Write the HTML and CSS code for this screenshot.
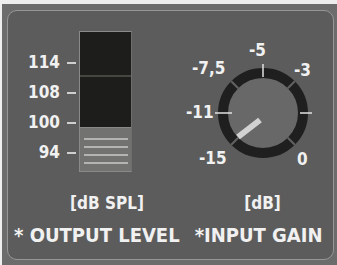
FILE: index.html
```html
<!DOCTYPE html>
<html>
<head>
<meta charset="utf-8">
<link rel="stylesheet" href="styles.css">
</head>
<body>
<div class="frame">
  <div class="panel">
    <div class="controls">
      <div class="meter-group">
        <div class="scale">
          <div class="mark"><span class="num">114</span><span class="tick"></span></div>
          <div class="mark"><span class="num">108</span><span class="tick"></span></div>
          <div class="mark"><span class="num">100</span><span class="tick"></span></div>
          <div class="mark"><span class="num">94</span><span class="tick"></span></div>
        </div>
        <div class="meter-col">
          <div class="meter">
            <div class="seg seg-top"></div>
            <div class="seg seg-mid"></div>
            <div class="seg seg-low">
              <span class="bar"></span><span class="bar"></span><span class="bar"></span><span class="bar"></span>
            </div>
          </div>
          <div class="unit unit-spl">[dB SPL]</div>
        </div>
      </div>
      <div class="knob-group">
        <div class="knob">
          <svg class="dial" viewBox="0 0 150 130" width="150" height="130">
            <circle cx="80" cy="73" r="40" fill="#686868" stroke="#1f1f1f" stroke-width="10"/>
            <g stroke="#626262" stroke-width="2">
              <line x1="55.25" y1="48.25" x2="48.2" y2="41.2"/>
              <line x1="104.75" y1="48.25" x2="111.8" y2="41.2"/>
              <line x1="55.25" y1="97.75" x2="48.2" y2="104.8"/>
              <line x1="104.75" y1="97.75" x2="111.8" y2="104.8"/>
            </g>
            <g stroke="#e2e2e2" stroke-width="1.5">
              <line x1="80" y1="37" x2="80" y2="24"/>
              <line x1="32" y1="73" x2="49" y2="73"/>
              <line x1="117" y1="73" x2="129" y2="73"/>
            </g>
            <line x1="77" y1="80" x2="55" y2="97" stroke="#d2d2d2" stroke-width="6"/>
          </svg>
          <span class="lbl l-5">-5</span>
          <span class="lbl l-75">-7,5</span>
          <span class="lbl l-3">-3</span>
          <span class="lbl l-11">-11</span>
          <span class="lbl l-15">-15</span>
          <span class="lbl l-0">0</span>
        </div>
        <div class="unit unit-db">[dB]</div>
      </div>
    </div>
    <div class="titles">
      <span class="title">* OUTPUT LEVEL</span>
      <span class="title">*INPUT GAIN</span>
    </div>
  </div>
</div>
</body>
</html>
```

FILE: styles.css
```css
* { box-sizing: border-box; }
html, body { margin: 0; padding: 0; }
body {
  width: 337px;
  height: 265px;
  background: #eeeeee;
  overflow: hidden;
  font-family: "DejaVu Sans", sans-serif;
  font-stretch: condensed;
  font-weight: bold;
  color: #f1f1f1;
}
.frame {
  margin: 4px 0 0 2px;
  height: 261px;
  background: #6c6c6c;
  padding: 6px 6px 5px 5px;
  display: flex;
}
.panel {
  flex: 1;
  border: 1px solid #969696;
  border-radius: 10px;
  background: #5c5c5c;
  padding-top: 20px;
  display: flex;
  flex-direction: column;
}
.controls {
  display: flex;
  align-items: flex-start;
  padding-left: 12px;
}
.meter-group {
  display: flex;
  align-items: flex-start;
}
.scale {
  display: flex;
  flex-direction: column;
  padding-top: 21px;
}
.mark {
  height: 20px;
  display: flex;
  align-items: center;
}
.mark + .mark { margin-top: 10px; }
.num {
  width: 40px;
  text-align: right;
  font-size: 17px;
  line-height: 17px;
  margin-right: 7px;
}
.tick {
  width: 9px;
  height: 2px;
  background: #cfcfcf;
  margin-top: 2px;
}
.meter-col {
  margin-left: 3px;
  display: flex;
  flex-direction: column;
  align-items: center;
  width: 53px;
}
.meter {
  width: 53px;
  height: 141px;
  border: 1px solid #8a8a8a;
  border-right-color: #6e6e6e;
  background: #1d1d1b;
  display: flex;
  flex-direction: column;
}
.seg-top { height: 45px; border-bottom: 2px solid #454542; }
.seg-mid { height: 50px; }
.seg-low {
  flex: 1;
  background: #727270;
  border-top: 1px solid #8a8a88;
  display: flex;
  flex-direction: column;
  padding: 10px 3px 0 4px;
  gap: 6px;
}
.bar {
  display: block;
  height: 2px;
  background: #b4b4b2;
}
.unit {
  font-size: 17px;
  line-height: 17px;
  white-space: nowrap;
}
.unit-spl { margin-top: 23px; padding-left: 3px; }
.knob-group {
  margin-left: 51px;
  padding-top: 9px;
  display: flex;
  flex-direction: column;
  align-items: center;
}
.knob {
  position: relative;
  width: 150px;
  height: 130px;
}
.dial { display: block; }
.lbl {
  position: absolute;
  font-size: 17px;
  line-height: 17px;
  white-space: nowrap;
}
.l-5 { left: 66px; top: 2px; }
.l-75 { left: 9px; top: 20px; }
.l-3 { left: 111px; top: 22px; }
.l-11 { left: 3px; top: 64px; }
.l-15 { left: 16px; top: 110px; }
.l-0 { left: 114px; top: 111px; }
.unit-db { margin-top: 25px; padding-left: 9px; }
.titles {
  display: flex;
  gap: 15px;
  padding-left: 6px;
  margin-top: 13px;
}
.title {
  font-size: 20px;
  line-height: 20px;
  white-space: nowrap;
}
```
